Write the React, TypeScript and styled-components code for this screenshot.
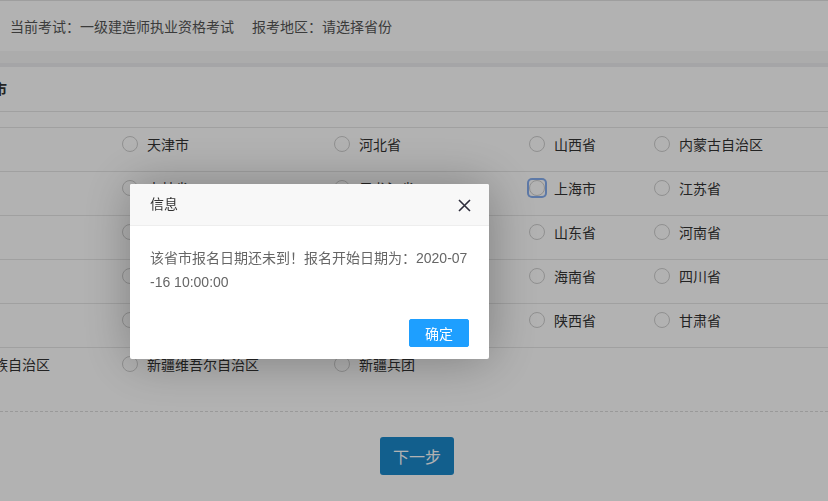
import React from 'react'
import styled, { createGlobalStyle } from 'styled-components'

const GlobalStyle = createGlobalStyle`
  html, body {
    margin: 0;
    padding: 0;
    overflow: hidden;
    background: #fff;
  }
  body {
    font-family: 'Liberation Sans', 'Noto Sans CJK SC', sans-serif;
    font-size: 14px;
    color: #333;
  }
`

const Page = styled.div`
  width: 828px;
  height: 501px;
  overflow: hidden;
`

const TopBar = styled.div`
  height: 50px;
  border-top: 1px solid #e2e2e2;
  display: flex;
  align-items: center;
  gap: 18px;
  padding-left: 10px;
  color: #555;
  font-size: 14px;
`

const Band = styled.div<{ $h: number; $bg: string }>`
  height: ${({ $h }) => $h}px;
  background: ${({ $bg }) => $bg};
`

const Panel = styled.div`
  overflow: hidden;
`

const PanelInner = styled.div`
  margin-left: -73px;
`

const PanelTitle = styled.div`
  height: 44px;
  line-height: 44px;
  padding-left: 24px;
  font-weight: bold;
  color: #333;
  border-bottom: 1px solid #e6e6e6;
`

const Table = styled.div`
  margin-top: 15px;
  border-top: 1px solid #e6e6e6;
`

const Row = styled.div<{ $last?: boolean }>`
  display: grid;
  grid-template-columns: 195px 212px 195px 125px 1fr;
  box-sizing: border-box;
  height: ${({ $last }) => ($last ? 43 : 44)}px;
  padding-top: 8px;
  border-bottom: ${({ $last }) => ($last ? 'none' : '1px solid #e6e6e6')};
`

const Option = styled.label`
  display: flex;
  align-items: center;
  gap: 9px;
  height: 16px;
  white-space: nowrap;
  color: #333;
  font-size: 14px;
`

const Circle = styled.span`
  width: 16px;
  height: 16px;
  box-sizing: border-box;
  border: 1px solid #cfcfcf;
  border-radius: 50%;
  flex: none;
`

const FocusWrap = styled.span`
  display: inline-flex;
  border-radius: 3px;
  box-shadow: 0 0 0 2px #86aef0;
`

const Footer = styled.div`
  margin-top: 20px;
  border-top: 1px dashed #dcdcdc;
  padding: 25px 0 0 6px;
  display: flex;
  justify-content: center;
`

const NextButton = styled.button`
  width: 74px;
  height: 38px;
  border: none;
  border-radius: 3px;
  background: #1b88cb;
  color: #fff;
  font-family: 'Noto Sans CJK SC', sans-serif;
  font-size: 16px;
`

const Shade = styled.div`
  position: fixed;
  inset: 0;
  background: rgba(0, 0, 0, 0.3);
`

const Dialog = styled.div`
  position: fixed;
  left: 130px;
  top: 184px;
  width: 359px;
  background: #fff;
  box-shadow: 1px 1px 50px rgba(0, 0, 0, 0.3);
  border-radius: 2px;
`

const DialogTitle = styled.div`
  position: relative;
  height: 41px;
  line-height: 41px;
  padding: 0 80px 0 20px;
  background: #f8f8f8;
  border-bottom: 1px solid #eee;
  color: #333;
  font-size: 14px;
  border-radius: 2px 2px 0 0;
`

const CloseIcon = styled.svg`
  position: absolute;
  right: 18px;
  top: 15px;
`

const DialogBody = styled.div`
  padding: 20px;
  line-height: 24px;
  font-size: 14px;
  color: #666;
  word-break: break-all;
`

const DialogBtns = styled.div`
  display: flex;
  justify-content: flex-end;
  padding: 0 15px 12px;
`

const OkButton = styled.button`
  height: 28px;
  margin: 5px 5px 0;
  padding: 0 15px;
  border: 1px solid #1e9fff;
  background: #1e9fff;
  color: #fff;
  border-radius: 2px;
  font-family: 'Noto Sans CJK SC', sans-serif;
  font-size: 14px;
`

const rows = [
  ['北京市', '天津市', '河北省', '山西省', '内蒙古自治区'],
  ['辽宁省', '吉林省', '黑龙江省', '上海市', '江苏省'],
  ['浙江省', '安徽省', '福建省', '山东省', '河南省'],
  ['湖北省', '湖南省', '广东省', '海南省', '四川省'],
  ['贵州省', '云南省', '西藏自治区', '陕西省', '甘肃省'],
  ['宁夏回族自治区', '新疆维吾尔自治区', '新疆兵团'],
]

export default function App() {
  return (
    <Page>
      <GlobalStyle />
      <TopBar>
        <span>当前考试：一级建造师执业资格考试</span>
        <span>报考地区：请选择省份</span>
      </TopBar>
      <Band $h={12} $bg="#f7f7f7" />
      <Band $h={4} $bg="#ededf0" />
      <Panel>
        <PanelInner>
          <PanelTitle>报考省市</PanelTitle>
          <Table>
            {rows.map((row, i) => (
              <Row key={i} $last={i === rows.length - 1}>
                {row.map((name) => (
                  <Option key={name}>
                    {name === '上海市' ? (
                      <FocusWrap>
                        <Circle />
                      </FocusWrap>
                    ) : (
                      <Circle />
                    )}
                    {name}
                  </Option>
                ))}
              </Row>
            ))}
          </Table>
        </PanelInner>
      </Panel>
      <Footer>
        <NextButton>下一步</NextButton>
      </Footer>

      <Shade />
      <Dialog>
        <DialogTitle>
          信息
          <CloseIcon width="13" height="13" viewBox="0 0 13 13">
            <path d="M1 1 L12 12 M12 1 L1 12" stroke="#2e2d3c" strokeWidth="1.6" />
          </CloseIcon>
        </DialogTitle>
        <DialogBody>该省市报名日期还未到！报名开始日期为：2020-07-16 10:00:00</DialogBody>
        <DialogBtns>
          <OkButton>确定</OkButton>
        </DialogBtns>
      </Dialog>
    </Page>
  )
}
